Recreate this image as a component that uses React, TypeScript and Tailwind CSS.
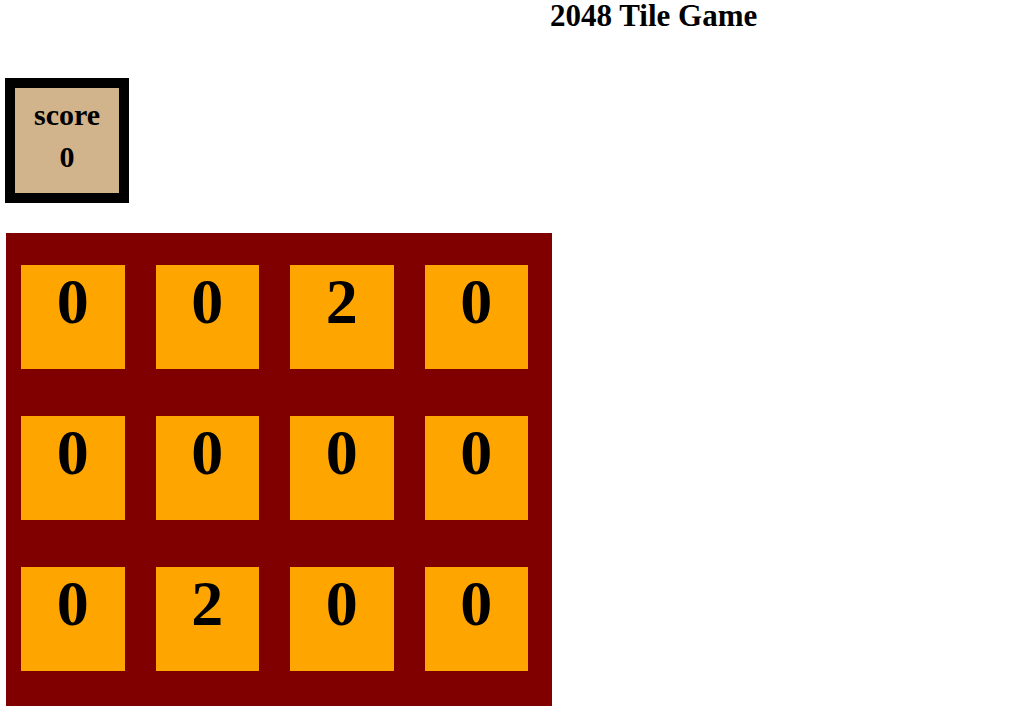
import React from "react";

const rows: number[][] = [
  [0, 0, 2, 0],
  [0, 0, 0, 0],
  [0, 2, 0, 0],
  [0, 0, 0, 0],
];

export default function App() {
  return (
    <div
      className="min-h-screen bg-white text-black overflow-hidden"
      style={{ fontFamily: '"Liberation Serif", "Times New Roman", serif' }}
    >
      <h1 className="pl-[550px] text-[31px] leading-[31px] font-bold m-0">
        2048 Tile Game
      </h1>
      <div className="ml-[5px] mt-[47px] w-[124px] border-[10px] border-black bg-[#d2b48c]">
        <div className="flex flex-col items-center pt-[10px] pb-[19px] gap-[8px] text-[30px] leading-[34px] font-bold">
          <div>score</div>
          <div>0</div>
        </div>
      </div>
      <div className="ml-[6px] mt-[30px] w-[546px] bg-[#800000] pl-[15px] pt-[32px] pb-[32px]">
        <div className="grid grid-cols-[repeat(4,103.5px)] gap-x-[31px] gap-y-[47.5px]">
          {rows.flat().map((v, i) => (
            <div
              key={i}
              className="h-[103.5px] bg-[#ffa500] text-center text-[64px] font-bold leading-[normal]"
            >
              {v}
            </div>
          ))}
        </div>
      </div>
    </div>
  );
}
